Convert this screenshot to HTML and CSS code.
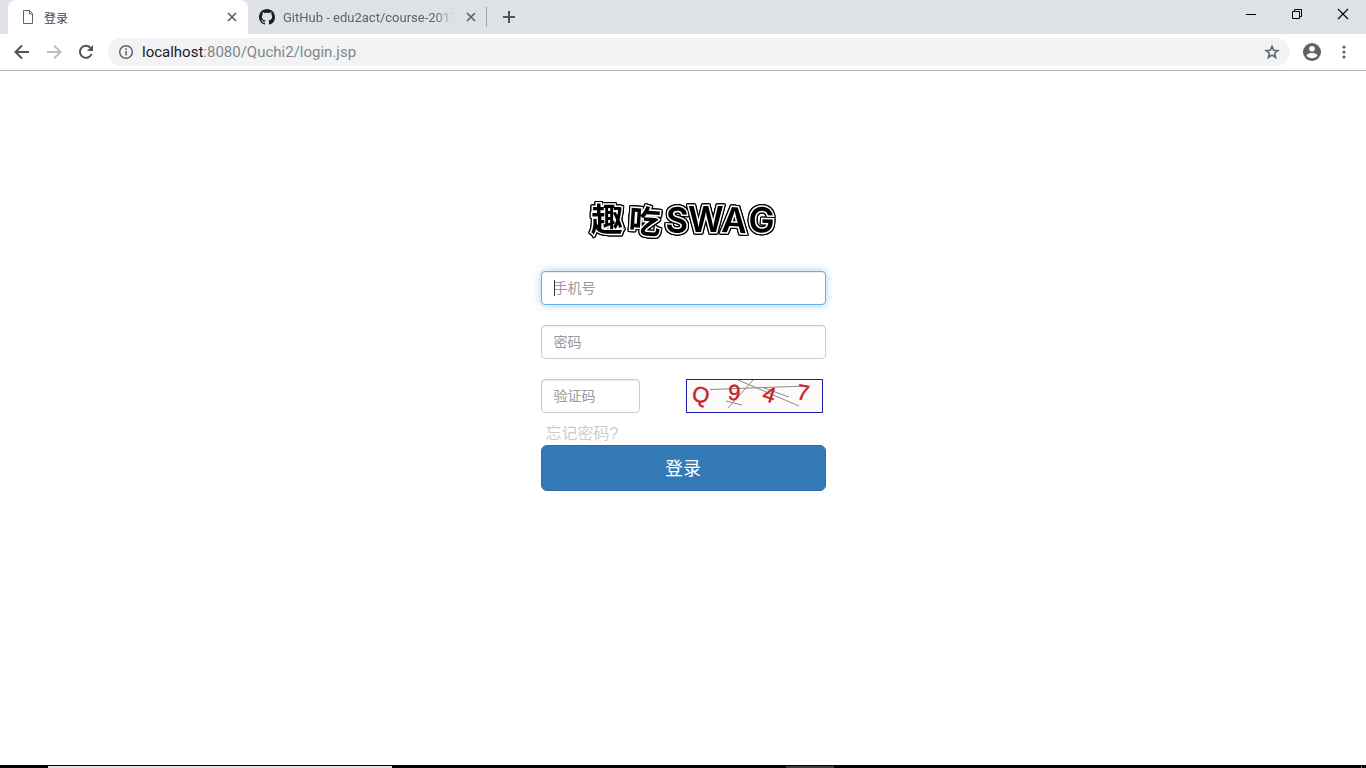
FILE: index.html
```html
<!DOCTYPE html>
<html lang="zh-CN">
<head>
<meta charset="utf-8">
<title>登录</title>
<link rel="stylesheet" href="styles.css">
</head>
<body>
<header class="browser">
  <div class="tabstrip">
    <div class="tab tab-active">
      <svg class="favicon" width="16" height="16" viewBox="0 0 16 16" fill="none" stroke="#5f6368"><path d="M3.500 1.500h6l3 3v10h-9zM9.500 1.500v3.500h3"/></svg>
      <span class="tab-title">登录</span>
      <button class="icon-button" aria-label="关闭标签页"><svg width="16" height="16" viewBox="0 0 16 16" stroke="#5f6368" stroke-width="1.700"><path d="M4 4l8 8M12 4l-8 8"/></svg></button>
    </div>
    <div class="tab">
      <svg class="favicon" width="16" height="16" viewBox="0 0 16 16" fill="#1b1f23"><path d="M8 0C3.580 0 0 3.580 0 8c0 3.540 2.290 6.530 5.470 7.590.4.070.55-.17.55-.38 0-.19-.01-.82-.01-1.490-2.010.37-2.530-.49-2.690-.94-.09-.23-.48-.94-.82-1.130-.28-.15-.68-.52-.01-.53.63-.01 1.080.58 1.230.82.72 1.210 1.870.87 2.330.66.07-.52.28-.87.51-1.070-1.780-.2-3.640-.89-3.640-3.950 0-.87.31-1.590.82-2.150-.08-.2-.36-1.020.08-2.120 0 0 .67-.21 2.200.82.64-.18 1.320-.27 2-.27s1.360.09 2 .27c1.530-1.040 2.200-.82 2.200-.82.44 1.100.16 1.920.08 2.120.51.56.82 1.270.82 2.150 0 3.070-1.870 3.750-3.650 3.950.29.25.54.73.54 1.480 0 1.070-.01 1.930-.01 2.200 0 .21.15.46.55.38A8.010 8.010 0 0 0 16 8c0-4.420-3.580-8-8-8z"/></svg>
      <span class="tab-title tab-title-long">GitHub - edu2act/course-2017</span>
      <button class="icon-button" aria-label="关闭标签页"><svg width="16" height="16" viewBox="0 0 16 16" stroke="#5f6368" stroke-width="1.700"><path d="M4 4l8 8M12 4l-8 8"/></svg></button>
    </div>
    <button class="icon-button new-tab" aria-label="新标签页"><svg width="16" height="16" viewBox="0 0 16 16" stroke="#505458" stroke-width="2"><path d="M8 2v12M2 8h12"/></svg></button>
    <div class="window-controls">
      <button class="window-button" aria-label="最小化"><svg width="12" height="12" viewBox="0 0 12 12" stroke="#000"><path d="M1 6.500h10"/></svg></button>
      <button class="window-button" aria-label="还原"><svg width="12" height="12" viewBox="0 0 12 12" fill="none" stroke="#000"><path d="M1.500 3.500h7v7h-7zM3.500 3.500v-2h7v7h-2"/></svg></button>
      <button class="window-button" aria-label="关闭"><svg width="12" height="12" viewBox="0 0 12 12" stroke="#000" stroke-width="1.100"><path d="M1 1l10 10M11 1L1 11"/></svg></button>
    </div>
  </div>
  <div class="toolbar">
    <button class="icon-button" aria-label="后退"><svg width="20" height="20" viewBox="0 0 20 20" fill="none" stroke="#505458" stroke-width="2"><path d="M17 10H4M10 3.500L3.500 10l6.500 6.500"/></svg></button>
    <button class="icon-button" aria-label="前进"><svg width="20" height="20" viewBox="0 0 20 20" fill="none" stroke="#babcbe" stroke-width="2"><path d="M3 10h13M10 3.500l6.500 6.500-6.500 6.500"/></svg></button>
    <button class="icon-button" aria-label="重新加载"><svg width="20" height="20" viewBox="0 0 20 20" fill="none" stroke="#505458" stroke-width="2"><path d="M15.500 12a6 6 0 1 1-1.200-6.300"/><path d="M17 3v6h-6z" fill="#505458" stroke="none"/></svg></button>
    <div class="address">
      <svg width="16" height="16" viewBox="0 0 16 16" fill="none" stroke="#5f6368" stroke-width="1.500"><circle cx="8" cy="8" r="6.300"/><path d="M8 7v4.500M8 4.300v1.700"/></svg>
      <span class="url"><span class="host">localhost</span>:8080/Quchi2/login.jsp</span>
      <button class="icon-button" aria-label="收藏"><svg width="16" height="16" viewBox="0 0 16 16" fill="none" stroke="#5f6368" stroke-width="1.500"><path d="M8 2.200l1.600 4 4.300.3-3.300 2.800 1.100 4.200L8 11.200l-3.700 2.300 1.100-4.200-3.300-2.800 4.300-.3z"/></svg></button>
    </div>
    <button class="icon-button" aria-label="用户"><svg width="20" height="20" viewBox="0 0 20 20"><circle cx="10" cy="10" r="9" fill="#5f6368"/><circle cx="10" cy="6.800" r="2.800" fill="#fff"/><path d="M4.500 13.500c1-2 3.500-2.500 5.500-2.500s4.500.5 5.500 2.500a6.700 6.700 0 0 1-11 0z" fill="#fff"/></svg></button>
    <button class="icon-button menu" aria-label="菜单"><svg width="16" height="16" viewBox="0 0 16 16" fill="#5f6368"><circle cx="8" cy="3" r="1.600"/><circle cx="8" cy="8" r="1.600"/><circle cx="8" cy="13" r="1.600"/></svg></button>
  </div>
</header>

<main class="page">
  <form class="login">
    <h1 class="logo">
      <svg width="200" height="46" viewBox="0 0 200 46" role="img" aria-label="趣吃SWAG">
        <text class="logo-text logo-cjk" x="8 45" y="33 34" rotate="0 4">趣吃</text>
        <text class="logo-text logo-latin" x="82 105 138 165" y="34 34 34 34" rotate="3 0 3 2">SWAG</text>
      </svg>
    </h1>
    <div class="field">
      <input class="control control-focus" type="tel" aria-label="手机号" placeholder="手机号">
      <span class="caret"></span>
    </div>
    <input class="control" type="password" aria-label="密码" placeholder="密码">
    <div class="code-row">
      <input class="control code-input" type="text" aria-label="验证码" placeholder="验证码">
      <svg class="captcha" width="137" height="34" viewBox="0 0 137 34" role="img" aria-label="Q 9 4 7">
        <rect x=".5" y=".5" width="136" height="33" fill="#fdfafa" stroke="#1c1ca8"/>
        <g stroke="#8d8989" fill="none"><path d="M24 10.500l96-3.500M52 1l61 26M67 1L42 29M40 22l16 4M78 9l25 9"/></g>
        <g class="captcha-text">
          <text x="6" y="23" transform="rotate(14 14 17)">Q</text>
          <text x="42" y="21" transform="rotate(5 48 14)">9</text>
          <text x="77" y="23" transform="rotate(18 83 16)">4</text>
          <text x="111" y="21" transform="rotate(10 116 13)">7</text>
        </g>
      </svg>
    </div>
    <a class="forgot" href="#">忘记密码?</a>
    <button class="submit" type="submit">登录</button>
  </form>
</main>
<footer class="taskbar"><span class="task-search"></span><span class="task-active"></span><span class="task-desktop"></span></footer>
</body>
</html>
```
FILE: styles.css
```css
* { box-sizing: border-box; }
body {
  margin: 0;
  min-height: 100vh;
  display: flex;
  flex-direction: column;
  background: #fff;
  font-family: "Liberation Sans", "Noto Sans CJK SC", sans-serif;
  font-size: 14px;
  color: #333;
}
button { border: 0; padding: 0; background: none; font: inherit; }
svg { display: block; flex: none; overflow: visible; }
.icon-button { display: flex; flex: none; }

.browser { font-family: Roboto, "Noto Sans CJK SC", sans-serif; border-bottom: 1px solid #b5b5b5; }
.tabstrip { display: flex; align-items: center; height: 34px; padding-left: 8px; background: #dee1e6; }
.tab {
  display: flex;
  align-items: center;
  gap: 8px;
  width: 239px;
  height: 20px;
  padding: 0 7px 0 11px;
  border-right: 1px solid #a0a3a8;
  font-size: 13px;
  color: #5f6368;
}
.tab-active {
  width: 240px;
  height: 34px;
  padding: 0 8px 0 12px;
  border: 0;
  border-radius: 8px 8px 0 0;
  background: #fff;
  font-size: 12px;
  color: #45494d;
}
.tab-title { flex: 1; min-width: 0; white-space: nowrap; }
.tab-title-long { mask-image: linear-gradient(to right, #000 88%, transparent); }
.new-tab { margin-left: 14px; }
.window-controls { display: flex; align-self: flex-start; margin-left: auto; }
.window-button { display: flex; align-items: center; justify-content: center; width: 46px; height: 28px; }

.toolbar { display: flex; align-items: center; gap: 12px; height: 36px; padding: 0 14px 0 12px; }
.address {
  display: flex;
  flex: 1;
  align-items: center;
  gap: 8px;
  height: 28px;
  padding: 0 10px;
  border-radius: 14px;
  background: #f1f3f4;
}
.url { flex: 1; font-size: 15px; color: #80868b; }
.host { color: #202124; }
.menu { margin-left: 2px; }

.page { flex: 1; display: flex; justify-content: center; align-items: flex-start; padding: 127px 16px 16px; }
.login { display: flex; flex-direction: column; width: 285px; gap: 20px; }
.logo { display: flex; justify-content: center; margin: 0 0 7px; }
.logo-text {
  fill: #000;
  stroke: #fff;
  stroke-width: 3px;
  stroke-linejoin: miter;
  paint-order: stroke;
  filter: drop-shadow(1px 0 0 #000) drop-shadow(-1px 0 0 #000) drop-shadow(0 1px 0 #000) drop-shadow(0 -1px 0 #000);
}
.logo-cjk { font: 700 32px "Noto Sans CJK SC", sans-serif; }
.logo-latin { font: 600 35px Inter, sans-serif; }

.field { position: relative; }
.control {
  display: block;
  width: 100%;
  height: 34px;
  padding: 6px 12px;
  border: 1px solid #ccc;
  border-radius: 4px;
  background: #fff;
  box-shadow: inset 0 1px 1px rgba(0, 0, 0, .075);
  font: inherit;
  outline: 0;
}
.control::placeholder { color: #999; opacity: 1; }
.control-focus { border-color: #66afe9; box-shadow: inset 0 1px 1px rgba(0, 0, 0, .075), 0 0 8px rgba(102, 175, 233, .6); }
.caret { position: absolute; left: 13px; top: 9px; width: 1px; height: 16px; background: #333; }
.code-row { display: flex; justify-content: space-between; padding-right: 3px; }
.code-input { width: 99px; }
.captcha-text { fill: #c9202b; stroke: #c9202b; stroke-width: .4px; font: 400 22px "Liberation Sans", sans-serif; }
.forgot { align-self: flex-start; margin: -10px 0 -20px 5px; font-size: 16px; line-height: 22px; color: #ccc; text-decoration: none; }
.submit {
  height: 46px;
  padding-bottom: 2px;
  border: 1px solid #2e6da4;
  border-radius: 6px;
  background: #337ab7;
  color: #fff;
  font-size: 18px;
}

.taskbar { display: flex; height: 3px; padding: 1px 4px 0 48px; background: #020606; }
.task-search { width: 344px; background: #dfe1df; }
.task-active { width: 48px; margin-left: 394px; background: #3a3d3b; }
.task-desktop { width: 1px; margin-left: auto; background: #777; }
```
